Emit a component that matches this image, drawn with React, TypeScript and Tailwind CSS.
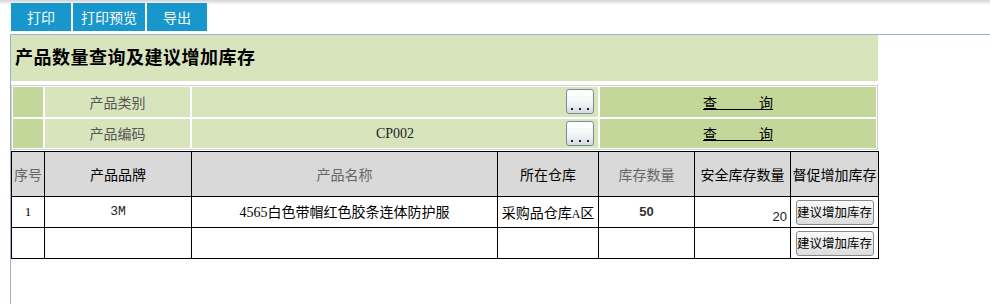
import React from 'react';

const cjk = '"Noto Sans CJK SC", sans-serif';
const mixed = '"Liberation Serif", "Noto Sans CJK SC", serif';

function DotsButton() {
  return (
    <button
      type="button"
      className="w-[28px] h-[25px] rounded-[3px] border border-[#7b8b9b] bg-gradient-to-b from-white via-[#f4f6f8] to-[#d5dbe2] flex items-end justify-center pb-[3px] gap-[6px]"
    >
      <span className="w-[2px] h-[2px] bg-[#222]" />
      <span className="w-[2px] h-[2px] bg-[#222]" />
      <span className="w-[2px] h-[2px] bg-[#222]" />
    </button>
  );
}

function SuggestButton() {
  return (
    <button
      type="button"
      className="w-[78px] h-[25px] px-0 rounded-[3px] border border-[#8a8a8a] bg-gradient-to-b from-[#fafafa] to-[#dcdcdc] text-[12.5px] text-black leading-none whitespace-nowrap"
      style={{ fontFamily: cjk }}
    >
      建议增加库存
    </button>
  );
}

function QueryRow({ label, value, h }: { label: string; value?: string; h: string }) {
  return (
    <>
      <div className={`bg-[#c4d79b] ${h}`} />
      <div className={`bg-[#d8e4bc] ${h} flex items-center justify-center text-[14px] text-[#555]`} style={{ fontFamily: cjk }}>
        {label}
      </div>
      <div className={`bg-[#d8e4bc] ${h} relative flex items-center justify-center`}>
        {value && (
          <div className="text-[14px] text-[#222] leading-none" style={{ fontFamily: mixed }}>
            {value}
          </div>
        )}
        <div className="absolute right-[4px] top-[2px]">
          <DotsButton />
        </div>
      </div>
      <div className={`bg-[#c4d79b] ${h} flex items-center justify-center`}>
        <a className="underline text-[14px] text-black cursor-pointer" style={{ fontFamily: cjk }}>
          查{'\u3000\u3000\u3000'}询
        </a>
      </div>
    </>
  );
}

export default function App() {
  const headers = [
    { t: '序号', c: 'text-[#666]' },
    { t: '产品品牌', c: 'text-black' },
    { t: '产品名称', c: 'text-[#666]' },
    { t: '所在仓库', c: 'text-black' },
    { t: '库存数量', c: 'text-[#666]' },
    { t: '安全库存数量', c: 'text-black' },
    { t: '督促增加库存', c: 'text-black' },
  ];

  return (
    <div className="w-[990px] h-[304px] bg-white bg-[linear-gradient(#d4d4d4,#ffffff_5px)] overflow-hidden">
      <div className="flex gap-[2px] pl-[11px] pt-[3px] h-[34px]">
        {['打印', '打印预览', '导出'].map((b) => (
          <button
            key={b}
            type="button"
            className={`${b === '打印预览' ? 'w-[72px]' : 'w-[60px]'} h-[28px] bg-[#1797cc] text-white text-[14px]`}
            style={{ fontFamily: cjk }}
          >
            {b}
          </button>
        ))}
      </div>

      <div className="ml-[10px] border-l border-t border-[#9cb0c8] h-[270px]">
        <div className="w-[867px] h-[46px] bg-[#d8e4bc] flex items-center pl-[4px]">
          <h1 className="text-[18px] font-bold text-black tracking-[0.5px]" style={{ fontFamily: mixed }}>
            产品数量查询及建议增加库存
          </h1>
        </div>

        <div className="mt-[4px] w-[867px] border border-[#d0d0d0] p-px bg-white">
          <div className="grid grid-cols-[30px_145px_406px_276px] gap-[2px]">
            <QueryRow label="产品类别" h="h-[30px]" />
            <QueryRow label="产品编码" value="CP002" h="h-[29px]" />
          </div>
        </div>

        <table className="mt-px w-[867px] table-fixed border-collapse text-[14px]" style={{ fontFamily: cjk }}>
          <colgroup>
            <col className="w-[33px]" />
            <col className="w-[147px]" />
            <col className="w-[306px]" />
            <col className="w-[101px]" />
            <col className="w-[96px]" />
            <col className="w-[96px]" />
            <col className="w-[88px]" />
          </colgroup>
          <thead>
            <tr className="h-[45px] bg-[#d9d9d9]">
              {headers.map((h) => (
                <th key={h.t} className={`border border-black font-normal whitespace-nowrap overflow-hidden p-0 ${h.c}`}>
                  {h.t}
                </th>
              ))}
            </tr>
          </thead>
          <tbody>
            <tr className="h-[31px]">
              <td className="border border-black text-center text-[13px]" style={{ fontFamily: mixed }}>1</td>
              <td className="border border-black text-center text-[13px] text-[#222]" style={{ fontFamily: '"Liberation Mono", monospace' }}>3M</td>
              <td className="border border-black text-center text-[14px] text-black" style={{ fontFamily: mixed }}>
                4565白色带帽红色胶条连体防护服
              </td>
              <td className="border border-black text-center text-[14px] text-black whitespace-nowrap p-0" style={{ fontFamily: cjk }}>
                采购品仓库<span className="text-[12px]" style={{ fontFamily: mixed }}>A</span>区
              </td>
              <td className="border border-black text-center text-[13px] font-semibold text-[#333]" style={{ fontFamily: '"Liberation Sans", sans-serif' }}>50</td>
              <td className="border border-black text-right align-bottom text-[13px] text-[#222] pr-[3px] pb-[1px]" style={{ fontFamily: '"Liberation Sans", sans-serif' }}>20</td>
              <td className="border border-black p-0">
                <div className="flex justify-center">
                  <SuggestButton />
                </div>
              </td>
            </tr>
            <tr className="h-[31px]">
              <td className="border border-black" />
              <td className="border border-black" />
              <td className="border border-black" />
              <td className="border border-black" />
              <td className="border border-black" />
              <td className="border border-black" />
              <td className="border border-black p-0">
                <div className="flex justify-center">
                  <SuggestButton />
                </div>
              </td>
            </tr>
          </tbody>
        </table>
      </div>
    </div>
  );
}
